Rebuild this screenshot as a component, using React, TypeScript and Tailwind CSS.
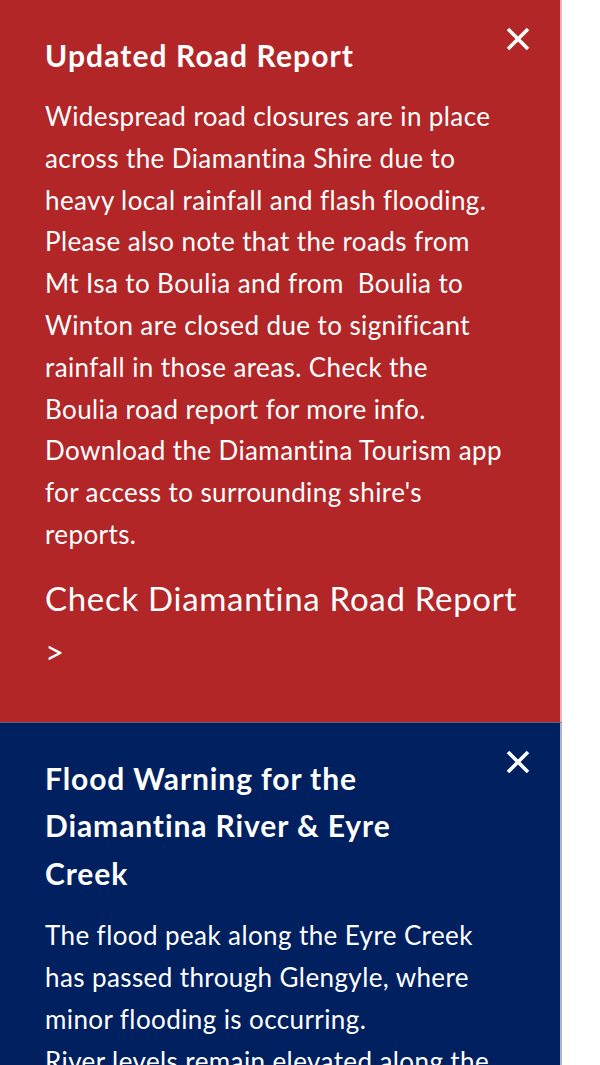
import React from "react";

function CloseIcon() {
  return (
    <svg width="26" height="26" viewBox="0 0 26 26" aria-hidden="true">
      <path d="M3 3 L23 23 M23 3 L3 23" stroke="white" strokeWidth="3.6" strokeLinecap="butt" />
    </svg>
  );
}

const font = { fontFamily: '"Lato", "Roboto", sans-serif' };

export default function App() {
  return (
    <div className="w-[600px] h-[1065px] overflow-hidden bg-white">
      {/* Red panel */}
      <section
        className="w-[562px] border-r-2 border-r-[#e8b5b6] bg-[#b22628] pl-[45px] pr-[29px] pt-[31px] pb-[44px] text-white"
        style={font}
      >
        <div className="flex items-start justify-between">
          <h2 className="text-[30px] font-bold leading-[48px] tracking-[1.1px]">Updated Road Report</h2>
          <button className="mt-[-5px] p-0" aria-label="Close">
            <CloseIcon />
          </button>
        </div>
        <p className="mt-[17px] text-[26px] leading-[41.8px] tracking-[0.4px] whitespace-nowrap">
          Widespread road closures are in place
          <br />
          across the Diamantina Shire due to
          <br />
          heavy local rainfall and flash flooding.
          <br />
          Please also note that the roads from
          <br />
          Mt Isa to Boulia and from&nbsp; Boulia to
          <br />
          Winton are closed due to significant
          <br />
          rainfall in those areas. Check the
          <br />
          Boulia road report for more info.
          <br />
          Download the Diamantina Tourism app
          <br />
          for access to surrounding shire's
          <br />
          reports.
        </p>
        <a className="mt-[16px] block text-[33px] leading-[53px] tracking-[0.7px] text-white">
          Check Diamantina Road Report
          <br />
          &gt;
        </a>
      </section>

      {/* Blue panel */}
      <section
        className="w-[562px] border-t border-t-[#5d6183] border-r-2 border-r-[#aeb6cf] bg-[#002060] pl-[45px] pr-[29px] pt-[32px] pb-[40px] text-white"
        style={font}
      >
        <div className="flex items-start justify-between">
          <h2 className="text-[30px] font-bold leading-[47.5px] tracking-[0.9px]">
            Flood Warning for the
            <br />
            Diamantina River &amp; Eyre
            <br />
            Creek
          </h2>
          <button className="mt-[-6px] p-0" aria-label="Close">
            <CloseIcon />
          </button>
        </div>
        <p className="mt-[18px] text-[26px] leading-[41.8px] tracking-[0.4px] whitespace-nowrap">
          The flood peak along the Eyre Creek
          <br />
          has passed through Glengyle, where
          <br />
          minor flooding is occurring.
          <br />
          River levels remain elevated along the
        </p>
      </section>
    </div>
  );
}
